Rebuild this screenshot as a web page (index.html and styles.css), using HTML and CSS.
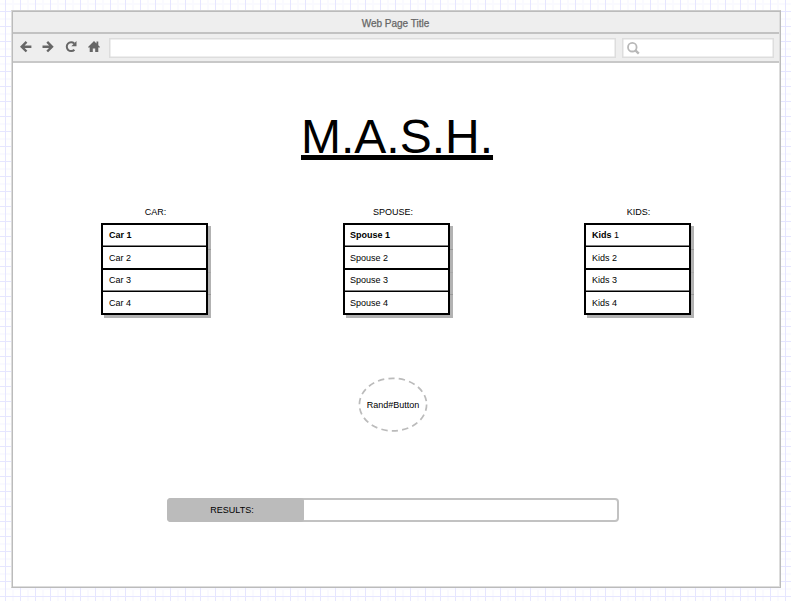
FILE: index.html
```html
<!DOCTYPE html>
<html lang="en">
<head>
<meta charset="utf-8">
<title>M.A.S.H.</title>
<link rel="stylesheet" href="styles.css">
</head>
<body>
<div class="window">
  <header class="titlebar">Web Page Title</header>
  <nav class="toolbar">
    <svg class="nav-icons" width="84" height="16" viewBox="0 0 84 16" fill="none" stroke="#666" stroke-width="2.4">
      <path d="M12.4 7.7H3M7.5 2.9 2.7 7.7l4.8 4.8"/>
      <path d="M23.5 7.7h9.2M28.2 2.9 33 7.7l-4.8 4.8"/>
      <path d="M55.2 4.5A4.4 4.4 0 1 0 55.4 10.7" stroke-width="2"/>
      <path d="M57.5 2v5.2h-5.2z" fill="#666" stroke="none"/>
      <path d="M75 1.9 69 7.9l.8.9.9-.6V13h3.1V9.4h2.4V13h3.1V8.2l.9.6.8-.9-1.7-1.7V2.6h-1.8v1.8z" fill="#666" stroke="none"/>
    </svg>
    <div class="field address"></div>
    <div class="field search">
      <svg width="14" height="14" viewBox="0 0 14 14" fill="none" stroke="#b8b8b8">
        <circle cx="5.3" cy="5.2" r="4.3" stroke-width="1.8"/>
        <path d="m8.4 8.3 3.4 3.3" stroke-width="2.4"/>
      </svg>
    </div>
  </nav>
  <main class="page">
    <h1>M.A.S.H.</h1>
    <div class="lists">
      <section>
        <h2>CAR:</h2>
        <ul><li><b>Car 1</b></li><li>Car 2</li><li>Car 3</li><li>Car 4</li></ul>
      </section>
      <section class="spouse">
        <h2>SPOUSE:</h2>
        <ul><li><b>Spouse 1</b></li><li>Spouse 2</li><li>Spouse 3</li><li>Spouse 4</li></ul>
      </section>
      <section>
        <h2>KIDS:</h2>
        <ul><li><b>Kids</b> 1</li><li>Kids 2</li><li>Kids 3</li><li>Kids 4</li></ul>
      </section>
    </div>
    <button class="rand">
      <svg class="ring" width="70" height="56" viewBox="0 0 70 56" fill="none" stroke="#bbb" stroke-width="1.7" stroke-dasharray="6.3 4.2">
        <ellipse cx="35" cy="27.6" rx="33.6" ry="26.3"/>
      </svg>
      <span>Rand#Button</span>
    </button>
    <div class="results"><div class="results-label">RESULTS:</div></div>
  </main>
</div>
</body>
</html>
```
FILE: styles.css
```css
* { box-sizing: border-box; }

body {
  margin: 0;
  height: 601px;
  padding: 10px 10px 13px 11px;
  overflow: hidden;
  font: 9px/11px "Liberation Sans", Arial, sans-serif;
  color: #000;
  background-color: #fff;
  background-image:
    linear-gradient(90deg, #e6e6ff 1px, transparent 1px),
    linear-gradient(#e6e6ff 1px, transparent 1px),
    linear-gradient(90deg, transparent 7px, #fafaff 7px, #fafaff 9px, transparent 9px),
    linear-gradient(transparent 7px, #fafaff 7px, #fafaff 9px, transparent 9px);
  background-size: 15px 15px;
  background-position: 5px 11px;
}

.window {
  display: flex;
  flex-direction: column;
  width: 770px;
  height: 578px;
  border: 1px solid #bbb;
  border-left-color: #ddd;
  border-top-color: #ccc;
  background: #fff;
  box-shadow: inset 1px 1px #bbb, inset -1px -1px #ddd;
}

.titlebar {
  height: 22px;
  margin: 1px 1px 0;
  padding-top: 1px;
  border-bottom: 2px solid #c2c2c2;
  background: #eee;
  color: #666;
  font-size: 10px;
  line-height: 22px;
  text-align: center;
  padding-right: 1px;
  -webkit-text-stroke: .25px #666;
}

.toolbar {
  display: flex;
  height: 29px;
  margin: 0 1px;
  padding: 4px 5px 0 6px;
  border-bottom: 2px solid #c8c8c8;
  background: #eee;
}

.nav-icons { flex: none; margin: 1px 6px 0 0; }
.field { flex: none; height: 20px; border: 1.5px solid #ddd; background: #fff; box-shadow: inset 0 0 0 .5px #ddd; }
.address { width: 507px; margin-right: 6px; }
.search { width: 152px; padding: 3px 0 0 4px; }
.search svg { display: block; }

.page {
  display: flex;
  flex: 1;
  flex-direction: column;
  align-items: center;
}

h1 {
  margin: 46px 0 0 2px;
  height: 56px;
  font-size: 48px;
  font-weight: 400;
  line-height: 56px;
  text-decoration: underline;
  text-decoration-thickness: 5px;
  text-underline-offset: 2px;
  text-decoration-skip-ink: none;
}

.lists {
  display: flex;
  gap: 134px;
  width: 590px;
  margin: 42px 0 0;
}

section { flex: none; width: 107px; }
.spouse { margin: 0 0 0 1px; }

h2 {
  margin: 0 0 5px;
  padding-left: 2px;
  font-size: 9px;
  font-weight: 400;
  line-height: 11px;
  text-align: center;
}

.spouse h2 { padding: 0 7px 0 0; }

ul {
  position: relative;
  height: 92px;
  margin: 0;
  padding: 0;
  list-style: none;
  border: 2px solid #000;
  background: #fff;
  box-shadow: 3px 3px #b2b2b2;
}

ul::after {
  content: "";
  position: absolute;
  top: 24px;
  right: -5px;
  width: 3px;
  height: 47px;
  background: linear-gradient(#999 1px, transparent 1px 23px, #a8a8a8 23px 24px, transparent 24px 45px, #999 45px 46px, transparent 46px);
}

li {
  height: 22.5px;
  padding: 5px 0 0 6px;
  border-bottom: 1px solid #000;
}

.spouse li { padding-left: 5px; }
li:nth-child(1),
li:nth-child(3) { height: 22px; box-shadow: inset 0 -.5px #000; }
li:nth-child(2) { height: 23px; border-bottom-width: 2px; }
li:nth-child(even) { padding-top: 6px; }
li:last-child { border-bottom: 0; }

.rand {
  position: relative;
  display: flex;
  align-items: center;
  justify-content: center;
  width: 70px;
  height: 56px;
  margin: 62px 6px 0 0;
  padding: 0;
  border: 0;
  background: none;
  font: inherit;
  color: #000;
}

.ring { position: absolute; inset: 0; }

.results {
  width: 452px;
  height: 24px;
  margin: 65px 6px 0 0;
  border: 2px solid #c2c2c2;
  border-radius: 4px;
}

.results-label {
  width: 137px;
  height: 24px;
  margin: -2px;
  border-radius: 4px 3px 3px 4px;
  background: #bbb;
  line-height: 25px;
  text-align: center;
  padding-right: 7px;
}
```
